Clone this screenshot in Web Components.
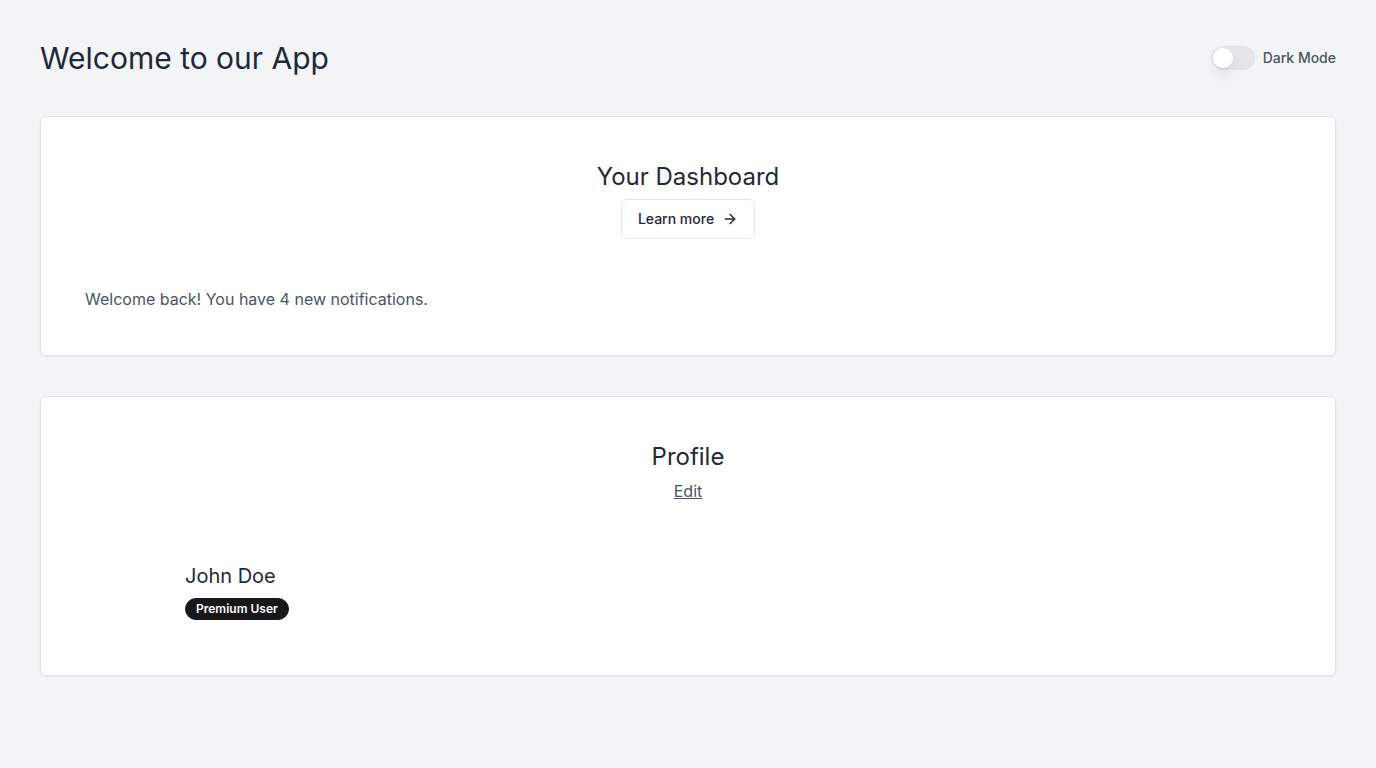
<!DOCTYPE html>
<html lang="en">
<head>
<meta charset="utf-8">
<meta name="viewport" content="width=device-width, initial-scale=1">
<title>Welcome to our App</title>
<style>
  body {
    margin: 0;
    min-height: 100vh;
    background: #f3f4f6;
    color: #1f2937;
    font: 400 16px/24px Inter, sans-serif;
  }
</style>
</head>
<body>
<app-shell>
  <span slot="title">Welcome to our App</span>
  <toggle-switch slot="actions">Dark Mode</toggle-switch>
  <panel-card>
    <span slot="title">Your Dashboard</span>
    <arrow-button slot="action">Learn more</arrow-button>
    <text-line>Welcome back! You have 4 new notifications.</text-line>
  </panel-card>
  <panel-card>
    <span slot="title">Profile</span>
    <text-link slot="action">Edit</text-link>
    <user-summary>
      <span slot="name">John Doe</span>
      <pill-badge slot="badge">Premium User</pill-badge>
    </user-summary>
  </panel-card>
</app-shell>

<script>
  const define = (name, markup) => {
    const template = document.createElement('template');
    template.innerHTML = markup;
    customElements.define(name, class extends HTMLElement {
      constructor() {
        super();
        this.attachShadow({ mode: 'open' }).append(template.content.cloneNode(true));
      }
    });
  };

  define('app-shell', `
    <style>
      :host { display: block; padding: 40px; }
      header { display: flex; align-items: center; justify-content: space-between; margin-bottom: 40px; }
      h1 { margin: 0; font-size: 30px; line-height: 36px; font-weight: 400; }
      main { display: grid; gap: 40px; }
    </style>
    <header><h1><slot name="title"></slot></h1><slot name="actions"></slot></header>
    <main><slot></slot></main>
  `);

  define('toggle-switch', `
    <style>
      :host { display: block; }
      label { display: flex; align-items: center; gap: 8px; font-size: 14px; line-height: 20px; font-weight: 500; color: #4b5563; cursor: pointer; }
      input {
        appearance: none; box-sizing: border-box; width: 44px; height: 24px; margin: 0; padding: 2px;
        border-radius: 12px; background: #e4e4e7; cursor: pointer;
      }
      input::before {
        content: ""; display: block; width: 20px; height: 20px; border-radius: 50%; background: #fff;
        box-shadow: 0 10px 15px -3px rgb(0 0 0 / .1), 0 4px 6px -4px rgb(0 0 0 / .1);
      }
      input:checked { background: #18181b; }
      input:checked::before { margin-left: 20px; }
    </style>
    <label><input type="checkbox" role="switch"><span><slot></slot></span></label>
  `);

  define('panel-card', `
    <style>
      :host { display: block; padding: 44px; background: #fff; border: 1px solid #e4e4e7; border-radius: 6px; box-shadow: 0 1px 2px rgb(0 0 0 / .05); }
      header { display: flex; flex-direction: column; align-items: center; gap: 6px; margin-bottom: 48px; }
      h2 { margin: 0; font-size: 24px; line-height: 32px; font-weight: 400; }
    </style>
    <header><h2><slot name="title"></slot></h2><slot name="action"></slot></header>
    <slot></slot>
  `);

  define('arrow-button', `
    <style>
      :host { display: block; }
      button {
        display: flex; align-items: center; gap: 8px; box-sizing: border-box; height: 40px; padding: 0 16px;
        border: 1px solid #e4e4e7; border-radius: 6px; background: #fff; color: inherit;
        font: 500 14px/20px Inter, sans-serif; cursor: pointer;
      }
      svg { width: 16px; height: 16px; fill: none; stroke: currentColor; stroke-width: 2; stroke-linecap: round; stroke-linejoin: round; }
    </style>
    <button type="button"><slot></slot><svg viewBox="0 0 24 24" aria-hidden="true"><path d="M5 12h14"/><path d="m12 5 7 7-7 7"/></svg></button>
  `);

  define('text-line', `
    <style>
      :host { display: block; color: #4b5563; }
      p { margin: 0; }
    </style>
    <p><slot></slot></p>
  `);

  define('text-link', `
    <style>
      :host { display: block; }
      a { color: #4b5563; text-decoration: underline; }
    </style>
    <a href="#"><slot></slot></a>
  `);

  define('user-summary', `
    <style>
      :host { display: flex; align-items: center; gap: 20px; }
      .avatar { width: 80px; height: 80px; border-radius: 50%; }
      .details { display: flex; flex-direction: column; align-items: flex-start; gap: 8px; }
      h3 { margin: 0; font-size: 20px; line-height: 28px; font-weight: 400; }
    </style>
    <div class="avatar"></div>
    <div class="details"><h3><slot name="name"></slot></h3><slot name="badge"></slot></div>
  `);

  define('pill-badge', `
    <style>
      :host {
        display: block; padding: 2px 10px; border: 1px solid #18181b; border-radius: 12px;
        background: #18181b; color: #fafafa; font-size: 12px; line-height: 16px; font-weight: 600;
      }
    </style>
    <slot></slot>
  `);
</script>
</body>
</html>
